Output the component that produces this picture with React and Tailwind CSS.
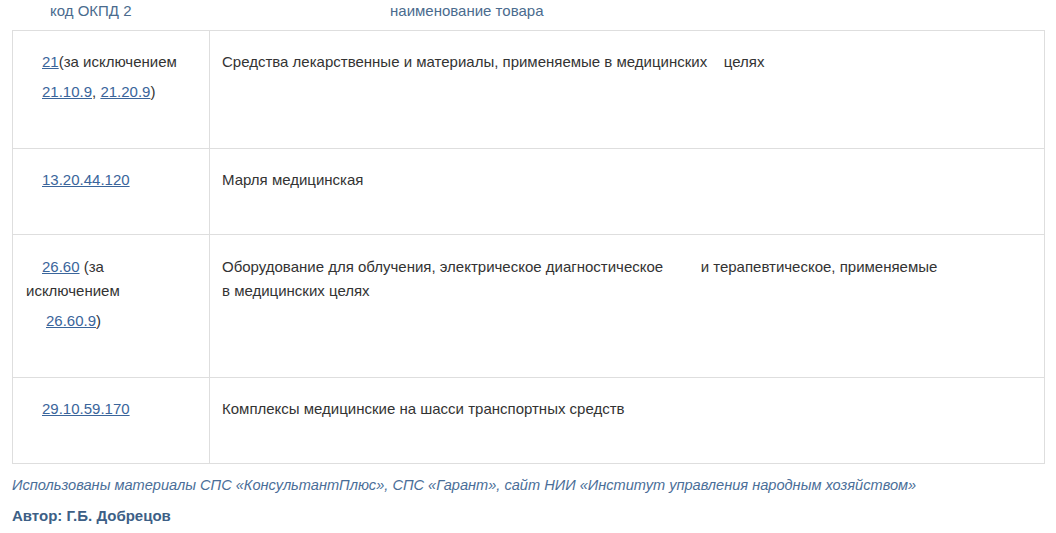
export default function App() {
  const link = "text-[#3a659b] underline";
  return (
    <div className="w-[1056px] h-[533px] bg-white overflow-hidden font-['Liberation_Sans',Arial,sans-serif] text-[15px] text-[#333]">
      <div className="flex h-[30px] leading-[22px] text-[#4a6b8e]">
        <div className="w-[209px] pl-[50px]">код ОКПД 2</div>
        <div className="pl-[181px]">наименование товара</div>
      </div>
      <div className="ml-[12px] w-[1033px] border border-[#dedede] leading-[24px]">
        <div className="flex h-[117px]">
          <div className="w-[197px] shrink-0 border-r border-[#dedede] pl-[29px] pt-[19px]">
            <div>
              <span className={link}>21</span>(за исключением
            </div>
            <div className="mt-[6px]">
              <span className={link}>21.10.9</span>, <span className={link}>21.20.9</span>)
            </div>
          </div>
          <div className="pl-[12px] pt-[19px] whitespace-pre">Средства лекарственные и материалы, применяемые в медицинских    целях</div>
        </div>
        <div className="flex h-[86px] border-t border-[#dedede]">
          <div className="w-[197px] shrink-0 border-r border-[#dedede] pl-[29px] pt-[19px]">
            <span className={link}>13.20.44.120</span>
          </div>
          <div className="pl-[12px] pt-[19px]">Марля медицинская</div>
        </div>
        <div className="flex h-[143px] border-t border-[#dedede]">
          <div className="w-[197px] shrink-0 border-r border-[#dedede] pt-[20px]">
            <div className="pl-[29px]">
              <span className={link}>26.60</span> (за
            </div>
            <div className="pl-[13px]">исключением</div>
            <div className="pl-[33px] mt-[6px]">
              <span className={link}>26.60.9</span>)
            </div>
          </div>
          <div className="pl-[12px] pt-[20px] whitespace-pre">
            {"Оборудование для облучения, электрическое диагностическое         и терапевтическое, применяемые"}
            <br />
            {"в медицинских целях"}
          </div>
        </div>
        <div className="flex h-[86px] border-t border-[#dedede]">
          <div className="w-[197px] shrink-0 border-r border-[#dedede] pl-[29px] pt-[19px]">
            <span className={link}>29.10.59.170</span>
          </div>
          <div className="pl-[12px] pt-[19px]">Комплексы медицинские на шасси транспортных средств</div>
        </div>
      </div>
      <div className="pl-[12px] mt-[9px] leading-[24px] italic text-[14.6px] text-[#4a6e98]">
        Использованы материалы СПС «КонсультантПлюс», СПС «Гарант», сайт НИИ «Институт управления народным хозяйством»
      </div>
      <div className="pl-[12px] mt-[7px] leading-[24px] font-bold text-[#3d5f86]">Автор: Г.Б. Добрецов</div>
    </div>
  );
}
